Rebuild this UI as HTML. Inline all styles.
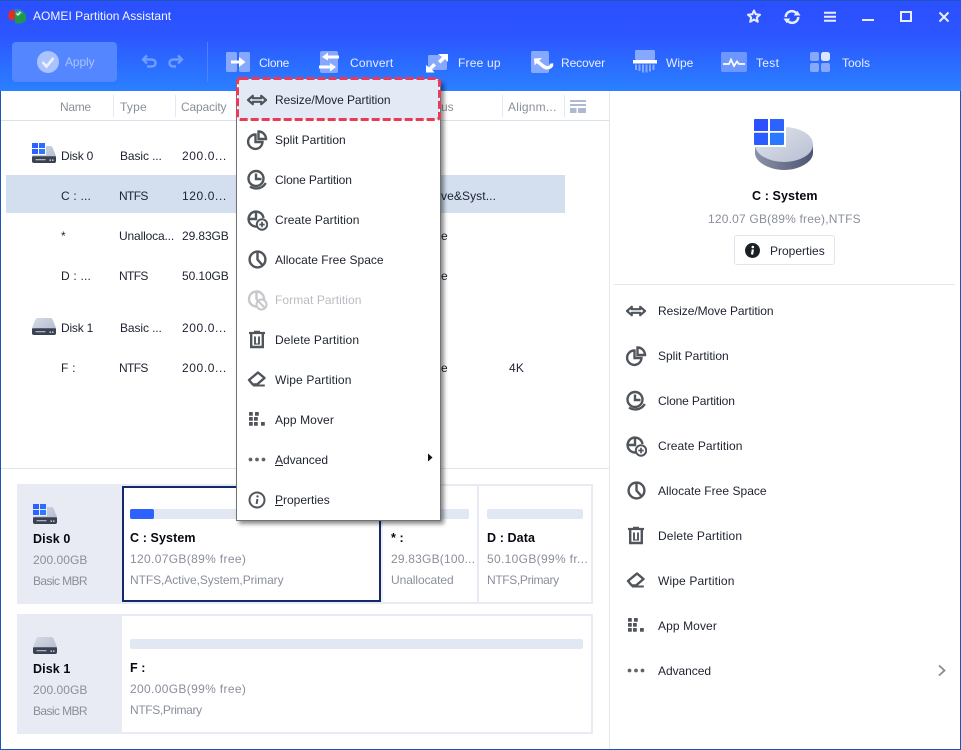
<!DOCTYPE html>
<html lang="en">
<head>
<meta charset="utf-8">
<title>AOMEI Partition Assistant</title>
<style>
html,body{margin:0;padding:0;background:#fff}
#w{position:relative;width:961px;height:750px;overflow:hidden;background:#fff;font-family:"Liberation Sans",sans-serif;font-size:12px;color:#1d2230;letter-spacing:0}
.t,.b,svg.a{position:absolute}
.t{white-space:nowrap;line-height:16px}
.hd{color:#8a8f98}
.g{color:#8a8f9c}
.bd{font-weight:bold;color:#050810;font-size:12.5px;letter-spacing:.1px}
.wt{color:#e8efff}
.mb{letter-spacing:-.6px}
.gb{letter-spacing:.05px}
.nt{letter-spacing:-.65px}
.d0{letter-spacing:-.2px}
.ba{letter-spacing:-.1px}
.sz{letter-spacing:.6px}
.np{letter-spacing:-.35px}
.fr{letter-spacing:.34px}
u{text-decoration:underline}
</style>
</head>
<body>
<div id="w">
<svg width="0" height="0" style="position:absolute">
<defs>
<symbol id="i-resize" viewBox="0 0 22 22"><path d="M2 11 6.800 6.800V9.200H15.200V6.800L20 11 15.200 15.200V12.800H6.800V15.200Z" fill="none" stroke="#50555c" stroke-width="2.200" stroke-linejoin="round"/></symbol>
<symbol id="i-split" viewBox="0 0 22 22"><path d="M9.500 5.500A7.200 7.200 0 1 0 16.500 13H9.500Z" fill="none" stroke="#50555c" stroke-width="2.400"/><path d="M12.500 2.500A7.500 7.500 0 0 1 20 10H12.500Z" fill="none" stroke="#50555c" stroke-width="2.400"/></symbol>
<symbol id="i-clone" viewBox="0 0 22 22"><circle cx="10" cy="9.500" r="7.500" fill="none" stroke="#50555c" stroke-width="2.400"/><path d="M10 4.500V10H15.500" fill="none" stroke="#50555c" stroke-width="2.400"/><path d="M4 17.500C8 20.500 16 20.500 19.800 14" fill="none" stroke="#50555c" stroke-width="2.300"/></symbol>
<symbol id="i-create" viewBox="0 0 22 22"><path d="M11 17.500A7.500 7.500 0 1 1 17.500 9" fill="none" stroke="#50555c" stroke-width="2.400"/><path d="M10 2.500V10H3" fill="none" stroke="#50555c" stroke-width="2.400"/><circle cx="16" cy="15.500" r="5.200" fill="#fff" stroke="#50555c" stroke-width="2"/><path d="M13.300 15.500H18.700M16 12.800V18.200" stroke="#50555c" stroke-width="1.700"/></symbol>
<symbol id="i-alloc" viewBox="0 0 22 22"><circle cx="11.500" cy="10.500" r="7.900" fill="none" stroke="#50555c" stroke-width="2.400"/><path d="M11.500 3V10.500L16.800 16.500" fill="none" stroke="#50555c" stroke-width="2.400"/></symbol>
<symbol id="i-format" viewBox="0 0 22 22"><circle cx="10.500" cy="10" r="7.500" fill="none" stroke="#c6c8cc" stroke-width="2.400"/><path d="M10.500 2.500V10L15 15" fill="none" stroke="#c6c8cc" stroke-width="2.400"/><circle cx="15.500" cy="15.500" r="5" fill="#fff" stroke="#c6c8cc" stroke-width="2"/><path d="M12 12 19 19" stroke="#c6c8cc" stroke-width="2"/></symbol>
<symbol id="i-del" viewBox="0 0 22 22"><path d="M3 4H19" stroke="#50555c" stroke-width="2.200"/><path d="M8 2.500H14" stroke="#50555c" stroke-width="1.500"/><path d="M5.200 5V18H16.800V5" fill="none" stroke="#50555c" stroke-width="2.400"/><path d="M9 7.500V14.500M13 7.500V14.500" stroke="#50555c" stroke-width="1.900"/><path d="M8 15H14" stroke="#50555c" stroke-width="1.200"/></symbol>
<symbol id="i-wipe" viewBox="0 0 22 22"><path d="M3 11 12 3.500 18.500 9 11 15.500 6.800 15.500Z" fill="none" stroke="#50555c" stroke-width="2.400" stroke-linejoin="round"/><path d="M7 16.500H18.800" stroke="#50555c" stroke-width="2"/></symbol>
<symbol id="i-app" viewBox="0 0 22 22"><g fill="#50555c"><rect x="3" y="3" width="3.800" height="3.800" rx=".6"/><rect x="9" y="3" width="3.800" height="3.800" rx=".6"/><rect x="3" y="8" width="3.800" height="3.800" rx=".6"/><rect x="8" y="8" width="3.800" height="3.800" rx=".6"/><rect x="3" y="13" width="3.800" height="3.800" rx=".6"/><rect x="8" y="13" width="3.800" height="3.800" rx=".6"/><rect x="15" y="13" width="3.800" height="3.800" rx=".6"/></g></symbol>
<symbol id="i-more" viewBox="0 0 22 22"><g fill="#60656c"><circle cx="4.500" cy="10.500" r="1.900"/><circle cx="11" cy="10.500" r="1.900"/><circle cx="17.500" cy="10.500" r="1.900"/></g></symbol>
<symbol id="i-info" viewBox="0 0 22 22"><circle cx="11" cy="11" r="7.500" fill="none" stroke="#50555c" stroke-width="2"/><circle cx="11.500" cy="7.400" r="1.200" fill="#50555c"/><path d="M11.400 10 10.600 15" stroke="#50555c" stroke-width="2" fill="none"/></symbol>
<symbol id="disk" viewBox="0 0 24 17"><path d="M5.500 0H18.500Q20 0 21 2.500L24 10V15Q24 17 22 17H2Q0 17 0 15V10L3 2.500Q4 0 5.500 0Z" fill="url(#dg)"/><path d="M0 11Q0 10.300 2 10.300H22Q24 10.300 24 11V15Q24 17 22 17H2Q0 17 0 15Z" fill="#3a4150"/><rect x="3.500" y="13" width="10" height="1.300" fill="#aab0c0"/><rect x="17.500" y="13.500" width="1.500" height="1.300" fill="#dfe3ec"/><rect x="20" y="13.500" width="1.500" height="1.300" fill="#dfe3ec"/></symbol>
<linearGradient id="dg" x1="0" y1="0" x2="1" y2="1"><stop offset="0" stop-color="#d6dbe7"/><stop offset="1" stop-color="#aeb6ca"/></linearGradient>
<linearGradient id="pie" x1="0" y1="0" x2="1" y2="1"><stop offset="0" stop-color="#e2e5ed"/><stop offset="1" stop-color="#b7bfd2"/></linearGradient>
<linearGradient id="pied" x1="0" y1="0" x2="1" y2="0"><stop offset="0" stop-color="#8b92a8"/><stop offset="1" stop-color="#4c5572"/></linearGradient>
</defs>
</svg>

<!-- Header -->
<div class="b" style="left:0;top:0;width:961px;height:91px;background:linear-gradient(#2b4fff 0,#2c55ff 38%,#2a80ff 100%)"></div>
<div class="b" style="left:0;top:0;width:961px;height:1px;background:#1c56b8"></div>

<!-- Logo -->
<svg class="a" style="left:8px;top:9px" width="18" height="15" viewBox="0 0 18 15">
<path d="M0 7C0 3 3 .5 7 .5L8 5 6 11.500 1 10.500Z" fill="#d8312c"/>
<path d="M6 .5C10 -.5 14 .5 16 3L14 5 8 5Z" fill="#2c7fc0"/>
<path d="M7 5 16 3.500 18 6V11C16 14 11 15.500 7 14Z" fill="#1f9a4b"/>
<path d="M7 4 12 1.500 14.500 4.500 9 7.500Z" fill="#3ebd6a"/>
<path d="M8.500 4.500 10 6 12.500 3" stroke="#fff" stroke-width="1" fill="none"/>
</svg>
<div class="t" style="left:33px;top:8px;color:#f2f6ff;letter-spacing:.03px">AOMEI Partition Assistant</div>

<!-- Window controls -->
<svg class="a" style="left:746px;top:8px" width="16" height="16" viewBox="0 0 16 16"><path d="M8 2.500 9.700 6.300 14 6.700 10.800 9.500 11.800 13.800 8 11.500 4.200 13.800 5.200 9.500 2 6.700 6.300 6.300Z" fill="none" stroke="#e8eeff" stroke-width="2" stroke-linejoin="round"/></svg>
<svg class="a" style="left:783px;top:9px" width="18" height="16" viewBox="0 0 18 16"><path d="M2.800 8A6 5.500 0 0 1 13 3.800" fill="none" stroke="#e8eeff" stroke-width="2.500"/><path d="M15.200 8A6 5.500 0 0 1 5 12.200" fill="none" stroke="#e8eeff" stroke-width="2.500"/><path d="M10.800 6.500H17.500L14.300 1.800Z" fill="#e8eeff"/><path d="M7.200 9.500H.5L3.700 14.200Z" fill="#e8eeff"/></svg>
<svg class="a" style="left:824px;top:10px" width="12" height="13" viewBox="0 0 12 13"><path d="M0 2.700H12M0 6.700H12M0 10.700H12" stroke="#e8eeff" stroke-width="2"/></svg>
<div class="b" style="left:862px;top:19px;width:12px;height:2px;background:#e8eeff"></div>
<div class="b" style="left:900px;top:11px;width:8px;height:7px;border:2px solid #e8eeff"></div>
<svg class="a" style="left:938px;top:11px" width="12" height="12" viewBox="0 0 12 12"><path d="M1.500 1.500 10.500 10.500M10.500 1.500 1.500 10.500" stroke="#e8eeff" stroke-width="2"/></svg>

<!-- Apply -->
<div class="b" style="left:12px;top:42px;width:105px;height:40px;border-radius:4px;background:#5487ff"></div>
<svg class="a" style="left:37px;top:51px" width="22" height="22" viewBox="0 0 22 22"><circle cx="11" cy="11" r="11" fill="#a9c3ff"/><path d="M5.500 11 9.500 15.500 16.500 7" fill="none" stroke="#eaf0ff" stroke-width="2.600"/></svg>
<div class="t" style="left:65px;top:54px;color:#a9c3ff;letter-spacing:-.1px">Apply</div>
<svg class="a" style="left:141px;top:54px" width="17" height="14" viewBox="0 0 17 14"><path d="M6 1.500 2 5.500 6 9.500" fill="none" stroke="#6f9cff" stroke-width="2.400"/><path d="M2.500 5.500H10Q14.500 5.500 14.500 9T10 12.500H6" fill="none" stroke="#6f9cff" stroke-width="2.400"/></svg>
<svg class="a" style="left:167px;top:54px" width="17" height="14" viewBox="0 0 17 14"><path d="M11 1.500 15 5.500 11 9.500" fill="none" stroke="#6f9cff" stroke-width="2.400"/><path d="M14.500 5.500H7Q2.500 5.500 2.500 9T7 12.500H9" fill="none" stroke="#6f9cff" stroke-width="2.400"/></svg>
<div class="b" style="left:207px;top:42px;width:1px;height:40px;background:#4f80ff"></div>

<!-- Toolbar -->
<svg class="a" style="left:226px;top:52px" width="24" height="20" viewBox="0 0 24 20"><rect x="0" y="0" width="11" height="20" rx="1.500" fill="#86a9ff"/><rect x="13" y="0" width="11" height="20" rx="1.500" fill="#86a9ff"/><path d="M5 8.500H13V5L19.500 10 13 15V11.500H5Z" fill="#fff"/></svg>
<div class="t wt" style="left:259px;top:55px;letter-spacing:-.25px">Clone</div>
<svg class="a" style="left:319px;top:51px" width="20" height="22" viewBox="0 0 20 22"><rect x="1" y="0" width="18" height="22" rx="2" fill="#86a9ff"/><path d="M20 5H9V2L3 6.500 9 10V8H20Z" fill="#fff" transform="translate(0 -.5)"/><path d="M0 14.500H11V12L17 16 11 20.500V17.500H0Z" fill="#fff"/></svg>
<div class="t wt" style="left:350px;top:55px;letter-spacing:.2px">Convert</div>
<svg class="a" style="left:426px;top:53px" width="22" height="20" viewBox="0 0 22 20"><rect x="2" y="2" width="19" height="15" rx="1.500" fill="#86a9ff"/><path d="M12 1H22V9L19 6 14.500 10.500 12 8 16 4Z" fill="#fff"/><path d="M0 19.500V12L3 14.500 7.500 10 10 12.500 6 16.500 8.500 19.500Z" fill="#fff"/></svg>
<div class="t wt" style="left:458px;top:55px;letter-spacing:.2px">Free up</div>
<svg class="a" style="left:531px;top:51px" width="23" height="22" viewBox="0 0 23 22"><rect x="0" y="0" width="18" height="22" rx="2" fill="#86a9ff"/><path d="M3 7.500 11 7 3.500 14.500Z" fill="#fff"/><path d="M6.500 10.500 12 15Q15 17.500 18 16.500T20.500 12.500" fill="none" stroke="#fff" stroke-width="3.400"/></svg>
<div class="t wt" style="left:561px;top:55px;letter-spacing:-.1px">Recover</div>
<svg class="a" style="left:633px;top:50px" width="24" height="24" viewBox="0 0 24 24"><rect x="2" y="0" width="20" height="10" rx="1.500" fill="#86a9ff"/><rect x="0" y="10" width="24" height="3.500" fill="#fff"/><path d="M3 14.500V20M6.500 14.500V21M10 14.500V22.500M13.500 14.500V22.500M17 14.500V21.500M20.500 14.500V20" stroke="#86a9ff" stroke-width="2"/></svg>
<div class="t wt" style="left:666px;top:55px">Wipe</div>
<svg class="a" style="left:721px;top:52px" width="26" height="20" viewBox="0 0 26 20"><rect x="0" y="0" width="26" height="20" rx="2" fill="#6d97ff"/><path d="M2 12H8L10 7.500 13 14 16 9.500 18 12H24" fill="none" stroke="#fff" stroke-width="1.700"/></svg>
<div class="t wt" style="left:756px;top:55px;letter-spacing:.3px">Test</div>
<svg class="a" style="left:810px;top:52px" width="21" height="21" viewBox="0 0 21 21"><rect x="0" y="0" width="9" height="9" rx="2" fill="#86a9ff"/><rect x="11" y="0" width="9" height="9" rx="2.500" fill="#dbe5ff"/><rect x="0" y="11" width="9" height="9" rx="2" fill="#86a9ff"/><rect x="11" y="11" width="9" height="9" rx="2" fill="#86a9ff"/></svg>
<div class="t wt" style="left:842px;top:55px">Tools</div>

<!-- Table header -->
<div class="t hd" style="left:60px;top:99px;letter-spacing:-.3px">Name</div>
<div class="t hd" style="left:120px;top:99px;letter-spacing:.2px">Type</div>
<div class="t hd" style="left:181px;top:99px;letter-spacing:-.17px">Capacity</div>
<div class="t hd" style="left:441px;top:99px">us</div>
<div class="t hd" style="left:508px;top:99px;letter-spacing:.2px">Alignm...</div>
<div class="b" style="left:113px;top:95px;width:1px;height:22px;background:#e4e8f0"></div>
<div class="b" style="left:175px;top:95px;width:1px;height:22px;background:#e4e8f0"></div>
<div class="b" style="left:502px;top:95px;width:1px;height:22px;background:#e4e8f0"></div>
<div class="b" style="left:564px;top:95px;width:1px;height:22px;background:#e4e8f0"></div>
<svg class="a" style="left:570px;top:100px" width="16" height="13" viewBox="0 0 16 13"><path d="M0 0H16V2H0ZM0 4H16V6H0Z" fill="#adb9cf"/><rect y="8" width="6.500" height="5" fill="#adb9cf"/><rect x="8" y="8" width="8" height="5" fill="#adb9cf"/></svg>
<div class="b" style="left:1px;top:120px;width:608px;height:1px;background:#dbe1ec"></div>

<!-- Rows -->
<div class="b" style="left:6px;top:175px;width:559px;height:38px;background:#d3dfee"></div>

<svg class="a" style="left:32px;top:146px" width="24" height="17"><use href="#disk" width="24" height="17"/></svg>
<div class="b" style="left:31px;top:142px;width:15px;height:13px;background:#fff"></div>
<svg class="a" style="left:32px;top:143px" width="13" height="11" viewBox="0 0 13 11"><rect width="6" height="5" fill="#2c62ff"/><rect x="7" width="6" height="5" fill="#2c6cff"/><rect y="6" width="6" height="5" fill="#2c62ff"/><rect x="7" y="6" width="6" height="5" fill="#2c78ff"/></svg>
<div class="t d0" style="left:61px;top:148px">Disk 0</div>
<div class="t ba" style="left:120px;top:148px">Basic ...</div>
<div class="t sz" style="left:182px;top:148px">200.0...</div>

<div class="t" style="left:61px;top:188px;letter-spacing:.2px">C : ...</div>
<div class="t nt" style="left:119px;top:188px">NTFS</div>
<div class="t sz" style="left:182px;top:188px">120.0...</div>
<div class="t" style="left:441px;top:188px;letter-spacing:.1px">ve&amp;Syst...</div>

<div class="t" style="left:61px;top:228px">*</div>
<div class="t" style="left:119px;top:228px;letter-spacing:-.15px">Unalloca...</div>
<div class="t" style="left:182px;top:228px;letter-spacing:-.1px">29.83GB</div>
<div class="t" style="left:441px;top:228px">e</div>

<div class="t" style="left:61px;top:268px;letter-spacing:.2px">D : ...</div>
<div class="t nt" style="left:119px;top:268px">NTFS</div>
<div class="t" style="left:182px;top:268px;letter-spacing:-.1px">50.10GB</div>
<div class="t" style="left:441px;top:268px">e</div>

<svg class="a" style="left:32px;top:318px" width="24" height="17"><use href="#disk" width="24" height="17"/></svg>
<div class="t d0" style="left:61px;top:320px">Disk 1</div>
<div class="t ba" style="left:120px;top:320px">Basic ...</div>
<div class="t sz" style="left:182px;top:320px">200.0...</div>

<div class="t" style="left:61px;top:360px;letter-spacing:.2px">F :</div>
<div class="t nt" style="left:119px;top:360px">NTFS</div>
<div class="t sz" style="left:182px;top:360px">200.0...</div>
<div class="t" style="left:441px;top:360px">e</div>
<div class="t" style="left:509px;top:360px;letter-spacing:.2px">4K</div>

<!-- Divider -->
<div class="b" style="left:1px;top:468px;width:608px;height:1px;background:#e0e5ee"></div>

<!-- Disk map: Disk 0 -->
<div class="b" style="left:17px;top:484px;width:576px;height:120px;background:#e8ebf3"></div>
<div class="b" style="left:122px;top:486px;width:469px;height:116px;background:#fff"></div>
<div class="b" style="left:381px;top:486px;width:2px;height:116px;background:#eef1f6"></div>
<div class="b" style="left:477px;top:486px;width:2px;height:116px;background:#e8ebf3"></div>
<div class="b" style="left:122px;top:486px;width:255px;height:112px;border:2px solid #14286e"></div>
<div class="b" style="left:130px;top:509px;width:243px;height:10px;border-radius:2px;background:#e2e8f3"></div>
<div class="b" style="left:130px;top:509px;width:24px;height:10px;border-radius:2px;background:#2c62ff"></div>
<div class="b" style="left:391px;top:509px;width:78px;height:10px;border-radius:2px;background:#e2e8f3"></div>
<div class="b" style="left:487px;top:509px;width:96px;height:10px;border-radius:2px;background:#e2e8f3"></div>

<svg class="a" style="left:33px;top:507px" width="24" height="17"><use href="#disk" width="24" height="17"/></svg>
<div class="b" style="left:32px;top:503px;width:15px;height:13px;background:#e8ebf3"></div>
<svg class="a" style="left:33px;top:504px" width="13" height="11" viewBox="0 0 13 11"><rect width="6" height="5" fill="#2c62ff"/><rect x="7" width="6" height="5" fill="#2c6cff"/><rect y="6" width="6" height="5" fill="#2c62ff"/><rect x="7" y="6" width="6" height="5" fill="#2c78ff"/></svg>
<div class="t bd" style="left:33px;top:531px">Disk 0</div>
<div class="t g gb" style="left:33px;top:552px">200.00GB</div>
<div class="t g mb" style="left:33px;top:573px">Basic MBR</div>

<div class="t bd" style="left:130px;top:530px">C : System</div>
<div class="t g fr" style="left:130px;top:551px">120.07GB(89% free)</div>
<div class="t g" style="left:130px;top:572px;letter-spacing:-.07px">NTFS,Active,System,Primary</div>
<div class="t bd" style="left:391px;top:530px">* :</div>
<div class="t g" style="left:391px;top:551px;letter-spacing:.2px">29.83GB(100...</div>
<div class="t g" style="left:391px;top:572px;letter-spacing:-.07px">Unallocated</div>
<div class="t bd" style="left:487px;top:530px">D : Data</div>
<div class="t g" style="left:487px;top:551px;letter-spacing:.33px">50.10GB(99% fr...</div>
<div class="t g np" style="left:487px;top:572px">NTFS,Primary</div>

<!-- Disk map: Disk 1 -->
<div class="b" style="left:17px;top:614px;width:576px;height:120px;background:#e8ebf3"></div>
<div class="b" style="left:122px;top:616px;width:469px;height:116px;background:#fff"></div>
<div class="b" style="left:130px;top:639px;width:453px;height:10px;border-radius:2px;background:#e2e8f3"></div>
<svg class="a" style="left:33px;top:637px" width="24" height="17"><use href="#disk" width="24" height="17"/></svg>
<div class="t bd" style="left:33px;top:661px">Disk 1</div>
<div class="t g gb" style="left:33px;top:682px">200.00GB</div>
<div class="t g mb" style="left:33px;top:703px">Basic MBR</div>
<div class="t bd" style="left:130px;top:660px">F :</div>
<div class="t g fr" style="left:130px;top:681px">200.00GB(99% free)</div>
<div class="t g np" style="left:130px;top:702px">NTFS,Primary</div>

<!-- Right panel -->
<div class="b" style="left:609px;top:91px;width:1px;height:658px;background:#e2e7f0"></div>
<svg class="a" style="left:750px;top:115px" width="68" height="58" viewBox="0 0 68 58">
<path d="M5 29V38C5 47 19 55 34 55S63 47 63 38V29Z" fill="url(#pied)"/>
<ellipse cx="34" cy="29.500" rx="29" ry="17.500" fill="url(#pie)"/>
<rect x="0" y="0" width="36" height="32" fill="#fff"/>
<path d="M5 4h13v12H4V5q0-1 1-1Z" fill="#2c50ff"/>
<path d="M20 4h13q1 0 1 1v11H20Z" fill="#2c62ff"/>
<path d="M4 17.700h14V30H5q-1 0-1-1Z" fill="#2c5cff"/>
<path d="M20 17.700h14V29q0 1-1 1H20Z" fill="#2a78ff"/>
</svg>
<div class="t bd" style="left:752px;top:188px">C : System</div>
<div class="t g" style="left:708px;top:211px;letter-spacing:.2px">120.07 GB(89% free),NTFS</div>
<div class="b" style="left:734px;top:235px;width:99px;height:28px;border:1px solid #dfe4ee;border-radius:3px"></div>
<svg class="a" style="left:745px;top:243px" width="15" height="15" viewBox="0 0 15 15"><circle cx="7.500" cy="7.500" r="7.500" fill="#1d1f26"/><circle cx="7.800" cy="4" r="1.300" fill="#fff"/><path d="M7.900 6.500 7 11.500" stroke="#fff" stroke-width="2.200"/></svg>
<div class="t" style="left:770px;top:243px">Properties</div>
<div class="b" style="left:614px;top:284px;width:341px;height:1px;background:#e2e7f0"></div>

<svg class="a" style="left:625px;top:300px" width="22" height="22"><use href="#i-resize"/></svg>
<div class="t" style="left:658px;top:303px;letter-spacing:-.06px">Resize/Move Partition</div>
<svg class="a" style="left:625px;top:345px" width="22" height="22"><use href="#i-split"/></svg>
<div class="t" style="left:658px;top:348px">Split Partition</div>
<svg class="a" style="left:625px;top:390px" width="22" height="22"><use href="#i-clone"/></svg>
<div class="t" style="left:658px;top:393px;letter-spacing:-.13px">Clone Partition</div>
<svg class="a" style="left:625px;top:435px" width="22" height="22"><use href="#i-create"/></svg>
<div class="t" style="left:658px;top:438px;letter-spacing:.07px">Create Partition</div>
<svg class="a" style="left:625px;top:480px" width="22" height="22"><use href="#i-alloc"/></svg>
<div class="t" style="left:658px;top:483px;letter-spacing:.03px">Allocate Free Space</div>
<svg class="a" style="left:625px;top:525px" width="22" height="22"><use href="#i-del"/></svg>
<div class="t" style="left:658px;top:528px;letter-spacing:.13px">Delete Partition</div>
<svg class="a" style="left:625px;top:570px" width="22" height="22"><use href="#i-wipe"/></svg>
<div class="t" style="left:658px;top:573px;letter-spacing:.13px">Wipe Partition</div>
<svg class="a" style="left:625px;top:615px" width="22" height="22"><use href="#i-app"/></svg>
<div class="t" style="left:658px;top:618px;letter-spacing:.1px">App Mover</div>
<svg class="a" style="left:625px;top:660px" width="22" height="22"><use href="#i-more"/></svg>
<div class="t" style="left:658px;top:663px;letter-spacing:-.05px">Advanced</div>
<svg class="a" style="left:937px;top:664px" width="10" height="13" viewBox="0 0 10 13"><path d="M2 1.500 7.500 6.500 2 11.500" fill="none" stroke="#858a94" stroke-width="1.800"/></svg>

<!-- Window borders -->
<div class="b" style="left:0;top:91px;width:1px;height:659px;background:#1c56b8"></div>
<div class="b" style="right:0;top:91px;width:1px;height:659px;background:#1c56b8"></div>
<div class="b" style="left:0;top:749px;width:961px;height:1px;background:#1c56b8"></div>

<!-- Context menu -->
<div class="b" style="left:236px;top:80px;width:203px;height:439px;background:#fff;border:1px solid #6f7378;box-shadow:3px 3px 4px rgba(0,0,0,.45)"></div>
<div class="b" style="left:238px;top:79px;width:201px;height:41px;background:#e3eaf5"></div>
<svg class="a" style="left:236px;top:77px" width="205" height="44" viewBox="0 0 205 44"><rect x="1.500" y="1.500" width="202" height="41" rx="3" fill="none" stroke="#ea3a55" stroke-width="3" stroke-dasharray="8 3"/></svg>

<svg class="a" style="left:246px;top:89px" width="22" height="22"><use href="#i-resize"/></svg>
<div class="t" style="left:275px;top:92px;letter-spacing:-.06px">Resize/Move Partition</div>
<svg class="a" style="left:246px;top:129px" width="22" height="22"><use href="#i-split"/></svg>
<div class="t" style="left:275px;top:132px">Split Partition</div>
<svg class="a" style="left:246px;top:169px" width="22" height="22"><use href="#i-clone"/></svg>
<div class="t" style="left:275px;top:172px;letter-spacing:-.13px">Clone Partition</div>
<svg class="a" style="left:246px;top:209px" width="22" height="22"><use href="#i-create"/></svg>
<div class="t" style="left:275px;top:212px;letter-spacing:.07px">Create Partition</div>
<svg class="a" style="left:246px;top:249px" width="22" height="22"><use href="#i-alloc"/></svg>
<div class="t" style="left:275px;top:252px;letter-spacing:.03px">Allocate Free Space</div>
<svg class="a" style="left:246px;top:289px" width="22" height="22"><use href="#i-format"/></svg>
<div class="t" style="left:275px;top:292px;color:#b9bcc2;letter-spacing:.07px">Format Partition</div>
<svg class="a" style="left:246px;top:329px" width="22" height="22"><use href="#i-del"/></svg>
<div class="t" style="left:275px;top:332px;letter-spacing:.13px">Delete Partition</div>
<svg class="a" style="left:246px;top:369px" width="22" height="22"><use href="#i-wipe"/></svg>
<div class="t" style="left:275px;top:372px;letter-spacing:.13px">Wipe Partition</div>
<svg class="a" style="left:246px;top:409px" width="22" height="22"><use href="#i-app"/></svg>
<div class="t" style="left:275px;top:412px;letter-spacing:.1px">App Mover</div>
<svg class="a" style="left:246px;top:449px" width="22" height="22"><use href="#i-more"/></svg>
<div class="t" style="left:275px;top:452px;letter-spacing:-.05px"><u>A</u>dvanced</div>
<svg class="a" style="left:427px;top:453px" width="6" height="9" viewBox="0 0 6 9"><path d="M1 .5 5.500 4.500 1 8.500Z" fill="#111"/></svg>
<svg class="a" style="left:246px;top:489px" width="22" height="22"><use href="#i-info"/></svg>
<div class="t" style="left:275px;top:492px"><u>P</u>roperties</div>
</div>
</body>
</html>
